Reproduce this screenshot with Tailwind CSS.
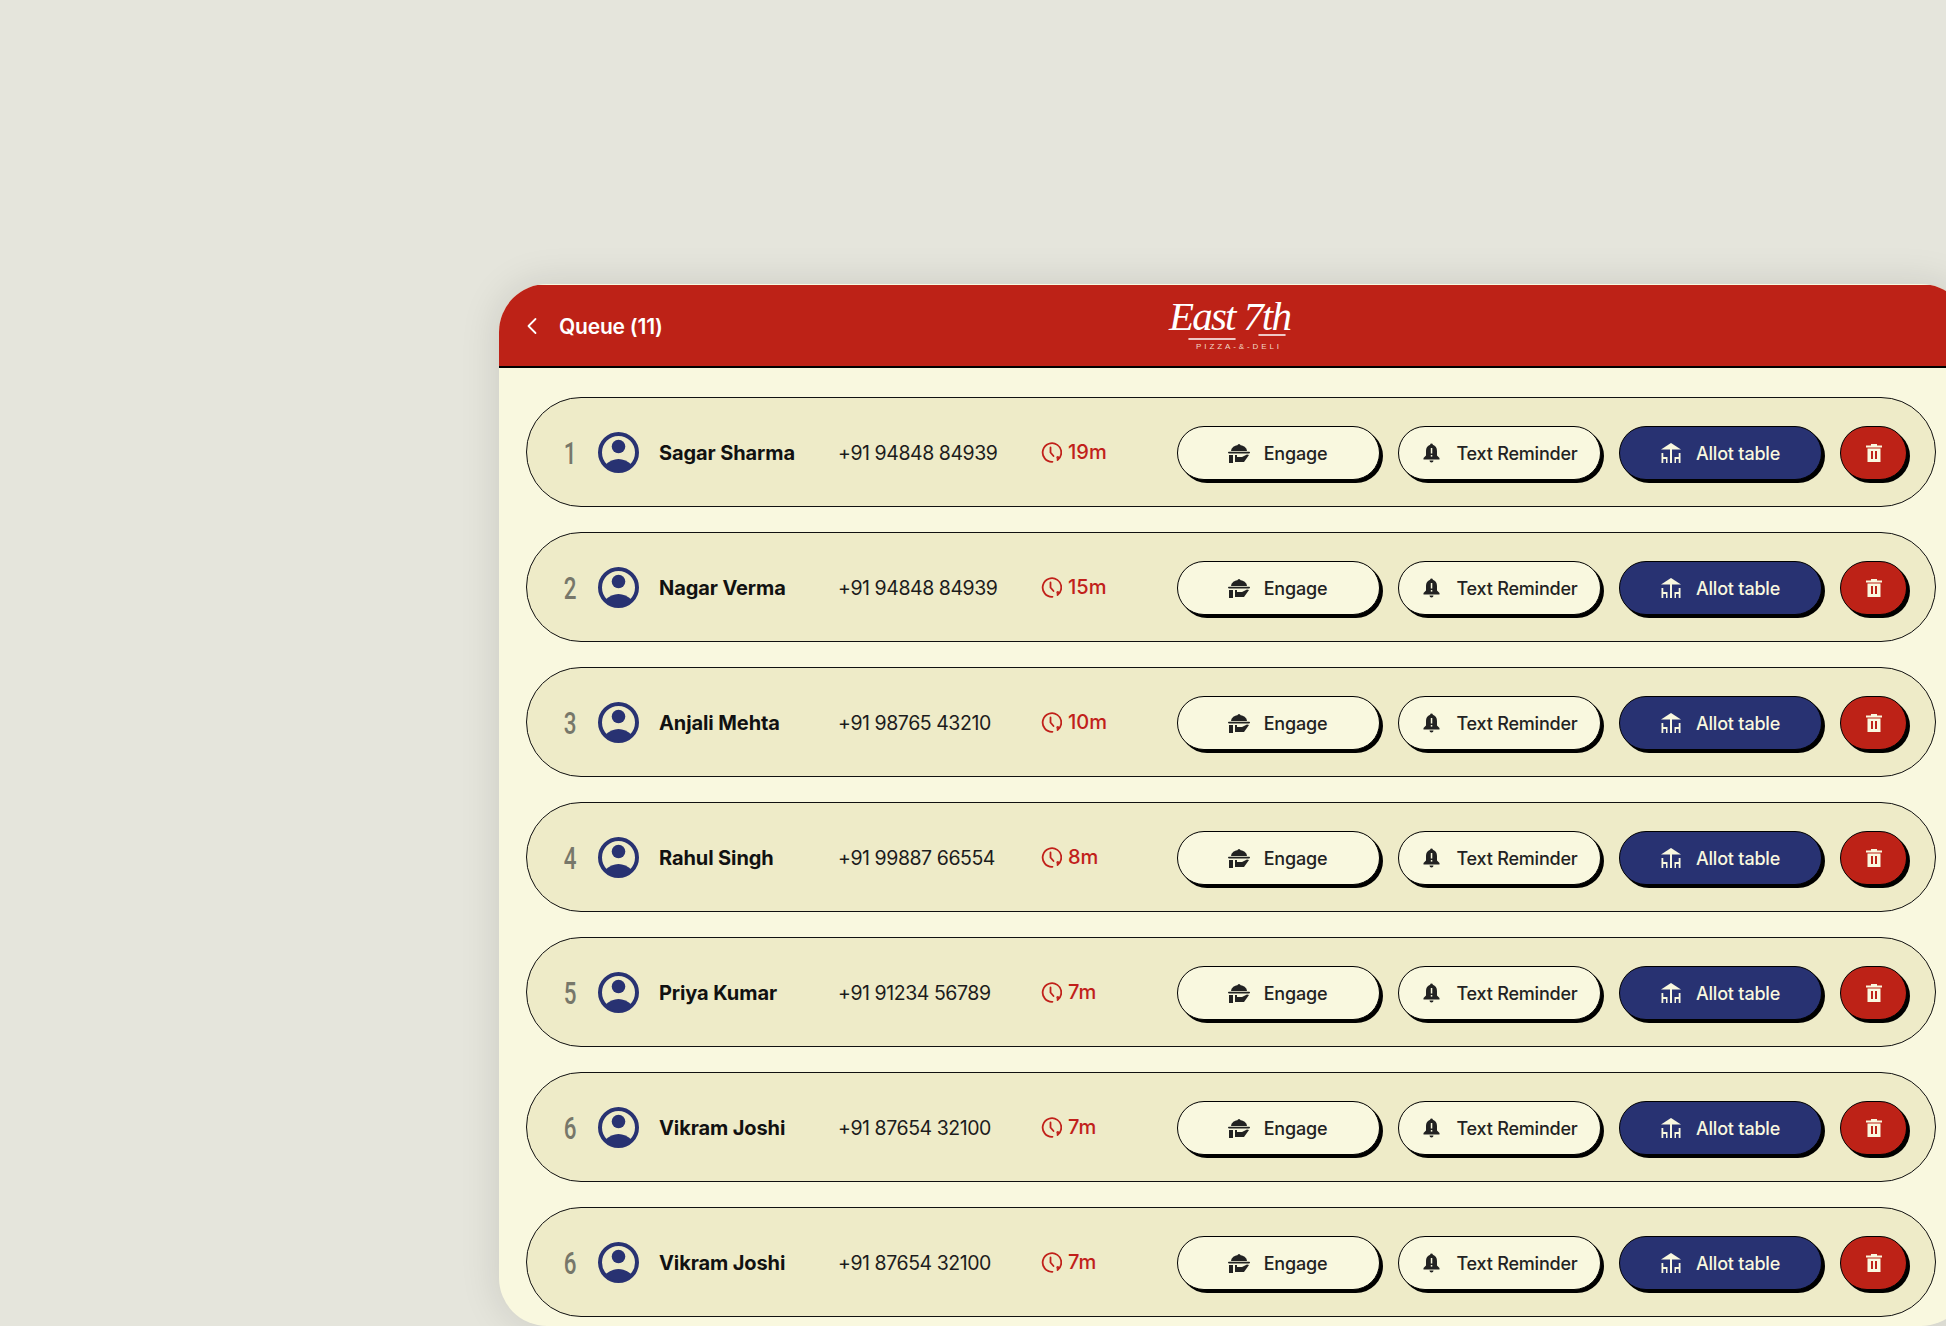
<!DOCTYPE html>
<html>
<head>
<meta charset="utf-8">
<script src="https://cdn.jsdelivr.net/npm/@tailwindcss/browser@4"></script>
</head>
<body class="bg-[#e5e5dc] overflow-hidden">
<div class="w-[1946px] h-[1326px] overflow-hidden pt-[284px] pl-[499px] font-['Inter',sans-serif]">
  <div class="w-[1470px] h-[1042px] rounded-[48px] overflow-hidden bg-[#f9f8df] shadow-[0_0_40px_rgba(0,0,0,0.12)] flex flex-col pt-px">
    <header class="relative h-[83px] shrink-0 bg-[#bd2217] border-b-2 border-black flex items-center text-white">
      <svg class="ml-[28px] w-[10px] h-[18px]" viewBox="0 0 10 18" fill="none" stroke="#fff" stroke-width="1.8" stroke-linecap="round" stroke-linejoin="round"><path d="M8.5 2 L1.5 9 L8.5 16"/></svg>
      <h1 class="ml-[22px] mt-[2px] text-[21px] leading-none font-semibold tracking-[-0.2px]">Queue (11)</h1>
      <div class="absolute left-[670px] top-[12px] w-[120px] h-[56px] text-center">
        <div class="font-['Liberation_Serif',serif] italic text-[41px] leading-[38px] tracking-[-1.8px] whitespace-nowrap h-[38px]">East 7th</div>
        <svg class="absolute left-[0px] top-[34px] w-[120px] h-[10px]" viewBox="0 0 120 10" fill="none"><path d="M20 8 H66 M90 4 H116" stroke="#fff" stroke-width="1.6" stroke-linecap="round"/></svg>
        <div class="mt-[8px] font-['Liberation_Sans',sans-serif] text-[8px] leading-[8px] tracking-[2.9px] text-[#f3d9c6] whitespace-nowrap pl-[20px]">PIZZA-&amp;-DELI</div>
      </div>
    </header>

    <main class="pt-[29px] pl-[27px] flex flex-col gap-[25px]">
      <!-- row 1 -->
      <div class="w-[1410px] h-[110px] shrink-0 rounded-full border border-[#111] bg-[#eeebc8] flex items-center pt-[2px]">
        <span class="ml-[33px] w-[20px] text-center text-[32px] leading-none font-medium text-[#77776a] scale-x-[0.7] font-['Roboto',sans-serif]">1</span>
        <svg class="ml-[18px] -mt-[2px] w-[41px] h-[41px] shrink-0" viewBox="0 0 41 41"><circle cx="20.5" cy="20.5" r="18.5" fill="none" stroke="#283272" stroke-width="4"/><circle cx="20.5" cy="14.5" r="6.8" fill="#283272"/><path d="M7 33 C11 29 16 27 20.5 27 C25 27 30 29 34 33 A 18.5 18.5 0 0 1 7 33Z" fill="#283272"/></svg>
        <span class="ml-[20px] w-[179px] text-[20px] font-bold tracking-[-0.1px] text-[#111]">Sagar Sharma</span>
        <span class="w-[203px] mt-[2px] text-[19.5px] tracking-[-0.45px] text-[#1c1c1c]">+91 94848 84939</span>
        <span class="w-[136px] -mt-[2px] flex items-center gap-[6px] text-[20px] font-medium text-[#c1201a]"><svg class="w-[21px] h-[21px]" viewBox="0 0 21 21" fill="none" stroke="#c1201a" stroke-width="1.8" stroke-linecap="round"><path d="M16.5 18 A 9.3 9.3 0 1 0 11.5 19.8"/><path d="M9.5 5.5 V10.5 L12.5 14"/><circle cx="16.8" cy="15.5" r=".6" fill="#c1201a"/></svg>19m</span>
        <div class="flex gap-[18px]">
          <button class="w-[203px] h-[54px] rounded-full border-[1.5px] border-black bg-[#f9f8df] shadow-[3px_3px_0_#000] flex items-center justify-center gap-[14px] pr-[2px] text-[18px] font-medium tracking-[-0.2px] text-[#222]"><svg class="w-[22px] h-[19px]" viewBox="0 0 22 19" fill="#222"><circle cx="11" cy="1.5" r="1.5"/><path d="M3 7 A8 6 0 0 1 19 7Z"/><rect x="0" y="7.8" width="22" height="1.6" rx=".8"/><rect x="1" y="11" width="4" height="8"/><path d="M7 11 H9 V13 L14 13 L19 10.5 L21 11 L16 18 H7Z"/></svg>Engage</button>
          <button class="w-[203px] h-[54px] rounded-full border-[1.5px] border-black bg-[#f9f8df] shadow-[3px_3px_0_#000] flex items-center justify-center gap-[16px] pl-[2px] text-[18px] font-medium tracking-[-0.2px] text-[#222]"><svg class="w-[17px] h-[20px]" viewBox="0 0 17 20"><path d="M8.5 0.5 a1.5 1.5 0 0 1 1.4 1.3 C12.5 2.6 14 5 14 8 V12.5 L16.5 15 V16.5 H0.5 V15 L3 12.5 V8 C3 5 4.5 2.6 7.1 1.8 A1.5 1.5 0 0 1 8.5 .5Z" fill="#222"/><path d="M6.5 17.5 H10.5 A2 2 0 0 1 6.5 17.5Z" fill="#222"/><rect x="7.8" y="5" width="1.5" height="5.5" fill="#f9f8df"/><rect x="7.8" y="12" width="1.5" height="1.6" fill="#f9f8df"/></svg>Text Reminder</button>
          <button class="w-[203px] h-[54px] rounded-full border-[1.5px] border-black bg-[#283272] shadow-[3px_3px_0_#000] flex items-center justify-center gap-[15px] text-[18px] font-medium tracking-[-0.2px] text-[#f9f8df]"><svg class="w-[20px] h-[20px]" viewBox="0 0 20 20" fill="#f9f8df"><path d="M10 0 L20 6.5 H0Z"/><rect x="9" y="6" width="2" height="14"/><rect x="0.5" y="10" width="1.8" height="10"/><path d="M2 14 H6.5 V20 H5 V16 H2Z"/><rect x="17.7" y="10" width="1.8" height="10"/><path d="M18 14 H13.5 V20 H15 V16 H18Z"/></svg>Allot table</button>
          <button class="w-[67px] h-[54px] rounded-full border-[1.5px] border-black bg-[#bd2217] shadow-[3px_3px_0_#000] flex items-center justify-center"><svg class="w-[16px] h-[18px]" viewBox="0 0 16 18" fill="#f9f8df"><path d="M0 1.5 H5 V0 H11 V1.5 H16 V3.5 H0Z"/><path fill-rule="evenodd" d="M1.5 4.5 H14.5 V18 H1.5Z M5 7 V15 H7 V7Z M9 7 V15 H11 V7Z"/></svg></button>
        </div>
      </div>
      <!-- row 2 -->
      <div class="w-[1410px] h-[110px] shrink-0 rounded-full border border-[#111] bg-[#eeebc8] flex items-center pt-[2px]">
        <span class="ml-[33px] w-[20px] text-center text-[32px] leading-none font-medium text-[#77776a] scale-x-[0.7] font-['Roboto',sans-serif]">2</span>
        <svg class="ml-[18px] -mt-[2px] w-[41px] h-[41px] shrink-0" viewBox="0 0 41 41"><circle cx="20.5" cy="20.5" r="18.5" fill="none" stroke="#283272" stroke-width="4"/><circle cx="20.5" cy="14.5" r="6.8" fill="#283272"/><path d="M7 33 C11 29 16 27 20.5 27 C25 27 30 29 34 33 A 18.5 18.5 0 0 1 7 33Z" fill="#283272"/></svg>
        <span class="ml-[20px] w-[179px] text-[20px] font-bold tracking-[-0.1px] text-[#111]">Nagar Verma</span>
        <span class="w-[203px] mt-[2px] text-[19.5px] tracking-[-0.45px] text-[#1c1c1c]">+91 94848 84939</span>
        <span class="w-[136px] -mt-[2px] flex items-center gap-[6px] text-[20px] font-medium text-[#c1201a]"><svg class="w-[21px] h-[21px]" viewBox="0 0 21 21" fill="none" stroke="#c1201a" stroke-width="1.8" stroke-linecap="round"><path d="M16.5 18 A 9.3 9.3 0 1 0 11.5 19.8"/><path d="M9.5 5.5 V10.5 L12.5 14"/><circle cx="16.8" cy="15.5" r=".6" fill="#c1201a"/></svg>15m</span>
        <div class="flex gap-[18px]">
          <button class="w-[203px] h-[54px] rounded-full border-[1.5px] border-black bg-[#f9f8df] shadow-[3px_3px_0_#000] flex items-center justify-center gap-[14px] pr-[2px] text-[18px] font-medium tracking-[-0.2px] text-[#222]"><svg class="w-[22px] h-[19px]" viewBox="0 0 22 19" fill="#222"><circle cx="11" cy="1.5" r="1.5"/><path d="M3 7 A8 6 0 0 1 19 7Z"/><rect x="0" y="7.8" width="22" height="1.6" rx=".8"/><rect x="1" y="11" width="4" height="8"/><path d="M7 11 H9 V13 L14 13 L19 10.5 L21 11 L16 18 H7Z"/></svg>Engage</button>
          <button class="w-[203px] h-[54px] rounded-full border-[1.5px] border-black bg-[#f9f8df] shadow-[3px_3px_0_#000] flex items-center justify-center gap-[16px] pl-[2px] text-[18px] font-medium tracking-[-0.2px] text-[#222]"><svg class="w-[17px] h-[20px]" viewBox="0 0 17 20"><path d="M8.5 0.5 a1.5 1.5 0 0 1 1.4 1.3 C12.5 2.6 14 5 14 8 V12.5 L16.5 15 V16.5 H0.5 V15 L3 12.5 V8 C3 5 4.5 2.6 7.1 1.8 A1.5 1.5 0 0 1 8.5 .5Z" fill="#222"/><path d="M6.5 17.5 H10.5 A2 2 0 0 1 6.5 17.5Z" fill="#222"/><rect x="7.8" y="5" width="1.5" height="5.5" fill="#f9f8df"/><rect x="7.8" y="12" width="1.5" height="1.6" fill="#f9f8df"/></svg>Text Reminder</button>
          <button class="w-[203px] h-[54px] rounded-full border-[1.5px] border-black bg-[#283272] shadow-[3px_3px_0_#000] flex items-center justify-center gap-[15px] text-[18px] font-medium tracking-[-0.2px] text-[#f9f8df]"><svg class="w-[20px] h-[20px]" viewBox="0 0 20 20" fill="#f9f8df"><path d="M10 0 L20 6.5 H0Z"/><rect x="9" y="6" width="2" height="14"/><rect x="0.5" y="10" width="1.8" height="10"/><path d="M2 14 H6.5 V20 H5 V16 H2Z"/><rect x="17.7" y="10" width="1.8" height="10"/><path d="M18 14 H13.5 V20 H15 V16 H18Z"/></svg>Allot table</button>
          <button class="w-[67px] h-[54px] rounded-full border-[1.5px] border-black bg-[#bd2217] shadow-[3px_3px_0_#000] flex items-center justify-center"><svg class="w-[16px] h-[18px]" viewBox="0 0 16 18" fill="#f9f8df"><path d="M0 1.5 H5 V0 H11 V1.5 H16 V3.5 H0Z"/><path fill-rule="evenodd" d="M1.5 4.5 H14.5 V18 H1.5Z M5 7 V15 H7 V7Z M9 7 V15 H11 V7Z"/></svg></button>
        </div>
      </div>
      <!-- row 3 -->
      <div class="w-[1410px] h-[110px] shrink-0 rounded-full border border-[#111] bg-[#eeebc8] flex items-center pt-[2px]">
        <span class="ml-[33px] w-[20px] text-center text-[32px] leading-none font-medium text-[#77776a] scale-x-[0.7] font-['Roboto',sans-serif]">3</span>
        <svg class="ml-[18px] -mt-[2px] w-[41px] h-[41px] shrink-0" viewBox="0 0 41 41"><circle cx="20.5" cy="20.5" r="18.5" fill="none" stroke="#283272" stroke-width="4"/><circle cx="20.5" cy="14.5" r="6.8" fill="#283272"/><path d="M7 33 C11 29 16 27 20.5 27 C25 27 30 29 34 33 A 18.5 18.5 0 0 1 7 33Z" fill="#283272"/></svg>
        <span class="ml-[20px] w-[179px] text-[20px] font-bold tracking-[-0.1px] text-[#111]">Anjali Mehta</span>
        <span class="w-[203px] mt-[2px] text-[19.5px] tracking-[-0.45px] text-[#1c1c1c]">+91 98765 43210</span>
        <span class="w-[136px] -mt-[2px] flex items-center gap-[6px] text-[20px] font-medium text-[#c1201a]"><svg class="w-[21px] h-[21px]" viewBox="0 0 21 21" fill="none" stroke="#c1201a" stroke-width="1.8" stroke-linecap="round"><path d="M16.5 18 A 9.3 9.3 0 1 0 11.5 19.8"/><path d="M9.5 5.5 V10.5 L12.5 14"/><circle cx="16.8" cy="15.5" r=".6" fill="#c1201a"/></svg>10m</span>
        <div class="flex gap-[18px]">
          <button class="w-[203px] h-[54px] rounded-full border-[1.5px] border-black bg-[#f9f8df] shadow-[3px_3px_0_#000] flex items-center justify-center gap-[14px] pr-[2px] text-[18px] font-medium tracking-[-0.2px] text-[#222]"><svg class="w-[22px] h-[19px]" viewBox="0 0 22 19" fill="#222"><circle cx="11" cy="1.5" r="1.5"/><path d="M3 7 A8 6 0 0 1 19 7Z"/><rect x="0" y="7.8" width="22" height="1.6" rx=".8"/><rect x="1" y="11" width="4" height="8"/><path d="M7 11 H9 V13 L14 13 L19 10.5 L21 11 L16 18 H7Z"/></svg>Engage</button>
          <button class="w-[203px] h-[54px] rounded-full border-[1.5px] border-black bg-[#f9f8df] shadow-[3px_3px_0_#000] flex items-center justify-center gap-[16px] pl-[2px] text-[18px] font-medium tracking-[-0.2px] text-[#222]"><svg class="w-[17px] h-[20px]" viewBox="0 0 17 20"><path d="M8.5 0.5 a1.5 1.5 0 0 1 1.4 1.3 C12.5 2.6 14 5 14 8 V12.5 L16.5 15 V16.5 H0.5 V15 L3 12.5 V8 C3 5 4.5 2.6 7.1 1.8 A1.5 1.5 0 0 1 8.5 .5Z" fill="#222"/><path d="M6.5 17.5 H10.5 A2 2 0 0 1 6.5 17.5Z" fill="#222"/><rect x="7.8" y="5" width="1.5" height="5.5" fill="#f9f8df"/><rect x="7.8" y="12" width="1.5" height="1.6" fill="#f9f8df"/></svg>Text Reminder</button>
          <button class="w-[203px] h-[54px] rounded-full border-[1.5px] border-black bg-[#283272] shadow-[3px_3px_0_#000] flex items-center justify-center gap-[15px] text-[18px] font-medium tracking-[-0.2px] text-[#f9f8df]"><svg class="w-[20px] h-[20px]" viewBox="0 0 20 20" fill="#f9f8df"><path d="M10 0 L20 6.5 H0Z"/><rect x="9" y="6" width="2" height="14"/><rect x="0.5" y="10" width="1.8" height="10"/><path d="M2 14 H6.5 V20 H5 V16 H2Z"/><rect x="17.7" y="10" width="1.8" height="10"/><path d="M18 14 H13.5 V20 H15 V16 H18Z"/></svg>Allot table</button>
          <button class="w-[67px] h-[54px] rounded-full border-[1.5px] border-black bg-[#bd2217] shadow-[3px_3px_0_#000] flex items-center justify-center"><svg class="w-[16px] h-[18px]" viewBox="0 0 16 18" fill="#f9f8df"><path d="M0 1.5 H5 V0 H11 V1.5 H16 V3.5 H0Z"/><path fill-rule="evenodd" d="M1.5 4.5 H14.5 V18 H1.5Z M5 7 V15 H7 V7Z M9 7 V15 H11 V7Z"/></svg></button>
        </div>
      </div>
      <!-- row 4 -->
      <div class="w-[1410px] h-[110px] shrink-0 rounded-full border border-[#111] bg-[#eeebc8] flex items-center pt-[2px]">
        <span class="ml-[33px] w-[20px] text-center text-[32px] leading-none font-medium text-[#77776a] scale-x-[0.7] font-['Roboto',sans-serif]">4</span>
        <svg class="ml-[18px] -mt-[2px] w-[41px] h-[41px] shrink-0" viewBox="0 0 41 41"><circle cx="20.5" cy="20.5" r="18.5" fill="none" stroke="#283272" stroke-width="4"/><circle cx="20.5" cy="14.5" r="6.8" fill="#283272"/><path d="M7 33 C11 29 16 27 20.5 27 C25 27 30 29 34 33 A 18.5 18.5 0 0 1 7 33Z" fill="#283272"/></svg>
        <span class="ml-[20px] w-[179px] text-[20px] font-bold tracking-[-0.1px] text-[#111]">Rahul Singh</span>
        <span class="w-[203px] mt-[2px] text-[19.5px] tracking-[-0.45px] text-[#1c1c1c]">+91 99887 66554</span>
        <span class="w-[136px] -mt-[2px] flex items-center gap-[6px] text-[20px] font-medium text-[#c1201a]"><svg class="w-[21px] h-[21px]" viewBox="0 0 21 21" fill="none" stroke="#c1201a" stroke-width="1.8" stroke-linecap="round"><path d="M16.5 18 A 9.3 9.3 0 1 0 11.5 19.8"/><path d="M9.5 5.5 V10.5 L12.5 14"/><circle cx="16.8" cy="15.5" r=".6" fill="#c1201a"/></svg>8m</span>
        <div class="flex gap-[18px]">
          <button class="w-[203px] h-[54px] rounded-full border-[1.5px] border-black bg-[#f9f8df] shadow-[3px_3px_0_#000] flex items-center justify-center gap-[14px] pr-[2px] text-[18px] font-medium tracking-[-0.2px] text-[#222]"><svg class="w-[22px] h-[19px]" viewBox="0 0 22 19" fill="#222"><circle cx="11" cy="1.5" r="1.5"/><path d="M3 7 A8 6 0 0 1 19 7Z"/><rect x="0" y="7.8" width="22" height="1.6" rx=".8"/><rect x="1" y="11" width="4" height="8"/><path d="M7 11 H9 V13 L14 13 L19 10.5 L21 11 L16 18 H7Z"/></svg>Engage</button>
          <button class="w-[203px] h-[54px] rounded-full border-[1.5px] border-black bg-[#f9f8df] shadow-[3px_3px_0_#000] flex items-center justify-center gap-[16px] pl-[2px] text-[18px] font-medium tracking-[-0.2px] text-[#222]"><svg class="w-[17px] h-[20px]" viewBox="0 0 17 20"><path d="M8.5 0.5 a1.5 1.5 0 0 1 1.4 1.3 C12.5 2.6 14 5 14 8 V12.5 L16.5 15 V16.5 H0.5 V15 L3 12.5 V8 C3 5 4.5 2.6 7.1 1.8 A1.5 1.5 0 0 1 8.5 .5Z" fill="#222"/><path d="M6.5 17.5 H10.5 A2 2 0 0 1 6.5 17.5Z" fill="#222"/><rect x="7.8" y="5" width="1.5" height="5.5" fill="#f9f8df"/><rect x="7.8" y="12" width="1.5" height="1.6" fill="#f9f8df"/></svg>Text Reminder</button>
          <button class="w-[203px] h-[54px] rounded-full border-[1.5px] border-black bg-[#283272] shadow-[3px_3px_0_#000] flex items-center justify-center gap-[15px] text-[18px] font-medium tracking-[-0.2px] text-[#f9f8df]"><svg class="w-[20px] h-[20px]" viewBox="0 0 20 20" fill="#f9f8df"><path d="M10 0 L20 6.5 H0Z"/><rect x="9" y="6" width="2" height="14"/><rect x="0.5" y="10" width="1.8" height="10"/><path d="M2 14 H6.5 V20 H5 V16 H2Z"/><rect x="17.7" y="10" width="1.8" height="10"/><path d="M18 14 H13.5 V20 H15 V16 H18Z"/></svg>Allot table</button>
          <button class="w-[67px] h-[54px] rounded-full border-[1.5px] border-black bg-[#bd2217] shadow-[3px_3px_0_#000] flex items-center justify-center"><svg class="w-[16px] h-[18px]" viewBox="0 0 16 18" fill="#f9f8df"><path d="M0 1.5 H5 V0 H11 V1.5 H16 V3.5 H0Z"/><path fill-rule="evenodd" d="M1.5 4.5 H14.5 V18 H1.5Z M5 7 V15 H7 V7Z M9 7 V15 H11 V7Z"/></svg></button>
        </div>
      </div>
      <!-- row 5 -->
      <div class="w-[1410px] h-[110px] shrink-0 rounded-full border border-[#111] bg-[#eeebc8] flex items-center pt-[2px]">
        <span class="ml-[33px] w-[20px] text-center text-[32px] leading-none font-medium text-[#77776a] scale-x-[0.7] font-['Roboto',sans-serif]">5</span>
        <svg class="ml-[18px] -mt-[2px] w-[41px] h-[41px] shrink-0" viewBox="0 0 41 41"><circle cx="20.5" cy="20.5" r="18.5" fill="none" stroke="#283272" stroke-width="4"/><circle cx="20.5" cy="14.5" r="6.8" fill="#283272"/><path d="M7 33 C11 29 16 27 20.5 27 C25 27 30 29 34 33 A 18.5 18.5 0 0 1 7 33Z" fill="#283272"/></svg>
        <span class="ml-[20px] w-[179px] text-[20px] font-bold tracking-[-0.1px] text-[#111]">Priya Kumar</span>
        <span class="w-[203px] mt-[2px] text-[19.5px] tracking-[-0.45px] text-[#1c1c1c]">+91 91234 56789</span>
        <span class="w-[136px] -mt-[2px] flex items-center gap-[6px] text-[20px] font-medium text-[#c1201a]"><svg class="w-[21px] h-[21px]" viewBox="0 0 21 21" fill="none" stroke="#c1201a" stroke-width="1.8" stroke-linecap="round"><path d="M16.5 18 A 9.3 9.3 0 1 0 11.5 19.8"/><path d="M9.5 5.5 V10.5 L12.5 14"/><circle cx="16.8" cy="15.5" r=".6" fill="#c1201a"/></svg>7m</span>
        <div class="flex gap-[18px]">
          <button class="w-[203px] h-[54px] rounded-full border-[1.5px] border-black bg-[#f9f8df] shadow-[3px_3px_0_#000] flex items-center justify-center gap-[14px] pr-[2px] text-[18px] font-medium tracking-[-0.2px] text-[#222]"><svg class="w-[22px] h-[19px]" viewBox="0 0 22 19" fill="#222"><circle cx="11" cy="1.5" r="1.5"/><path d="M3 7 A8 6 0 0 1 19 7Z"/><rect x="0" y="7.8" width="22" height="1.6" rx=".8"/><rect x="1" y="11" width="4" height="8"/><path d="M7 11 H9 V13 L14 13 L19 10.5 L21 11 L16 18 H7Z"/></svg>Engage</button>
          <button class="w-[203px] h-[54px] rounded-full border-[1.5px] border-black bg-[#f9f8df] shadow-[3px_3px_0_#000] flex items-center justify-center gap-[16px] pl-[2px] text-[18px] font-medium tracking-[-0.2px] text-[#222]"><svg class="w-[17px] h-[20px]" viewBox="0 0 17 20"><path d="M8.5 0.5 a1.5 1.5 0 0 1 1.4 1.3 C12.5 2.6 14 5 14 8 V12.5 L16.5 15 V16.5 H0.5 V15 L3 12.5 V8 C3 5 4.5 2.6 7.1 1.8 A1.5 1.5 0 0 1 8.5 .5Z" fill="#222"/><path d="M6.5 17.5 H10.5 A2 2 0 0 1 6.5 17.5Z" fill="#222"/><rect x="7.8" y="5" width="1.5" height="5.5" fill="#f9f8df"/><rect x="7.8" y="12" width="1.5" height="1.6" fill="#f9f8df"/></svg>Text Reminder</button>
          <button class="w-[203px] h-[54px] rounded-full border-[1.5px] border-black bg-[#283272] shadow-[3px_3px_0_#000] flex items-center justify-center gap-[15px] text-[18px] font-medium tracking-[-0.2px] text-[#f9f8df]"><svg class="w-[20px] h-[20px]" viewBox="0 0 20 20" fill="#f9f8df"><path d="M10 0 L20 6.5 H0Z"/><rect x="9" y="6" width="2" height="14"/><rect x="0.5" y="10" width="1.8" height="10"/><path d="M2 14 H6.5 V20 H5 V16 H2Z"/><rect x="17.7" y="10" width="1.8" height="10"/><path d="M18 14 H13.5 V20 H15 V16 H18Z"/></svg>Allot table</button>
          <button class="w-[67px] h-[54px] rounded-full border-[1.5px] border-black bg-[#bd2217] shadow-[3px_3px_0_#000] flex items-center justify-center"><svg class="w-[16px] h-[18px]" viewBox="0 0 16 18" fill="#f9f8df"><path d="M0 1.5 H5 V0 H11 V1.5 H16 V3.5 H0Z"/><path fill-rule="evenodd" d="M1.5 4.5 H14.5 V18 H1.5Z M5 7 V15 H7 V7Z M9 7 V15 H11 V7Z"/></svg></button>
        </div>
      </div>
      <!-- row 6 -->
      <div class="w-[1410px] h-[110px] shrink-0 rounded-full border border-[#111] bg-[#eeebc8] flex items-center pt-[2px]">
        <span class="ml-[33px] w-[20px] text-center text-[32px] leading-none font-medium text-[#77776a] scale-x-[0.7] font-['Roboto',sans-serif]">6</span>
        <svg class="ml-[18px] -mt-[2px] w-[41px] h-[41px] shrink-0" viewBox="0 0 41 41"><circle cx="20.5" cy="20.5" r="18.5" fill="none" stroke="#283272" stroke-width="4"/><circle cx="20.5" cy="14.5" r="6.8" fill="#283272"/><path d="M7 33 C11 29 16 27 20.5 27 C25 27 30 29 34 33 A 18.5 18.5 0 0 1 7 33Z" fill="#283272"/></svg>
        <span class="ml-[20px] w-[179px] text-[20px] font-bold tracking-[-0.1px] text-[#111]">Vikram Joshi</span>
        <span class="w-[203px] mt-[2px] text-[19.5px] tracking-[-0.45px] text-[#1c1c1c]">+91 87654 32100</span>
        <span class="w-[136px] -mt-[2px] flex items-center gap-[6px] text-[20px] font-medium text-[#c1201a]"><svg class="w-[21px] h-[21px]" viewBox="0 0 21 21" fill="none" stroke="#c1201a" stroke-width="1.8" stroke-linecap="round"><path d="M16.5 18 A 9.3 9.3 0 1 0 11.5 19.8"/><path d="M9.5 5.5 V10.5 L12.5 14"/><circle cx="16.8" cy="15.5" r=".6" fill="#c1201a"/></svg>7m</span>
        <div class="flex gap-[18px]">
          <button class="w-[203px] h-[54px] rounded-full border-[1.5px] border-black bg-[#f9f8df] shadow-[3px_3px_0_#000] flex items-center justify-center gap-[14px] pr-[2px] text-[18px] font-medium tracking-[-0.2px] text-[#222]"><svg class="w-[22px] h-[19px]" viewBox="0 0 22 19" fill="#222"><circle cx="11" cy="1.5" r="1.5"/><path d="M3 7 A8 6 0 0 1 19 7Z"/><rect x="0" y="7.8" width="22" height="1.6" rx=".8"/><rect x="1" y="11" width="4" height="8"/><path d="M7 11 H9 V13 L14 13 L19 10.5 L21 11 L16 18 H7Z"/></svg>Engage</button>
          <button class="w-[203px] h-[54px] rounded-full border-[1.5px] border-black bg-[#f9f8df] shadow-[3px_3px_0_#000] flex items-center justify-center gap-[16px] pl-[2px] text-[18px] font-medium tracking-[-0.2px] text-[#222]"><svg class="w-[17px] h-[20px]" viewBox="0 0 17 20"><path d="M8.5 0.5 a1.5 1.5 0 0 1 1.4 1.3 C12.5 2.6 14 5 14 8 V12.5 L16.5 15 V16.5 H0.5 V15 L3 12.5 V8 C3 5 4.5 2.6 7.1 1.8 A1.5 1.5 0 0 1 8.5 .5Z" fill="#222"/><path d="M6.5 17.5 H10.5 A2 2 0 0 1 6.5 17.5Z" fill="#222"/><rect x="7.8" y="5" width="1.5" height="5.5" fill="#f9f8df"/><rect x="7.8" y="12" width="1.5" height="1.6" fill="#f9f8df"/></svg>Text Reminder</button>
          <button class="w-[203px] h-[54px] rounded-full border-[1.5px] border-black bg-[#283272] shadow-[3px_3px_0_#000] flex items-center justify-center gap-[15px] text-[18px] font-medium tracking-[-0.2px] text-[#f9f8df]"><svg class="w-[20px] h-[20px]" viewBox="0 0 20 20" fill="#f9f8df"><path d="M10 0 L20 6.5 H0Z"/><rect x="9" y="6" width="2" height="14"/><rect x="0.5" y="10" width="1.8" height="10"/><path d="M2 14 H6.5 V20 H5 V16 H2Z"/><rect x="17.7" y="10" width="1.8" height="10"/><path d="M18 14 H13.5 V20 H15 V16 H18Z"/></svg>Allot table</button>
          <button class="w-[67px] h-[54px] rounded-full border-[1.5px] border-black bg-[#bd2217] shadow-[3px_3px_0_#000] flex items-center justify-center"><svg class="w-[16px] h-[18px]" viewBox="0 0 16 18" fill="#f9f8df"><path d="M0 1.5 H5 V0 H11 V1.5 H16 V3.5 H0Z"/><path fill-rule="evenodd" d="M1.5 4.5 H14.5 V18 H1.5Z M5 7 V15 H7 V7Z M9 7 V15 H11 V7Z"/></svg></button>
        </div>
      </div>
      <!-- row 7 -->
      <div class="w-[1410px] h-[110px] shrink-0 rounded-full border border-[#111] bg-[#eeebc8] flex items-center pt-[2px]">
        <span class="ml-[33px] w-[20px] text-center text-[32px] leading-none font-medium text-[#77776a] scale-x-[0.7] font-['Roboto',sans-serif]">6</span>
        <svg class="ml-[18px] -mt-[2px] w-[41px] h-[41px] shrink-0" viewBox="0 0 41 41"><circle cx="20.5" cy="20.5" r="18.5" fill="none" stroke="#283272" stroke-width="4"/><circle cx="20.5" cy="14.5" r="6.8" fill="#283272"/><path d="M7 33 C11 29 16 27 20.5 27 C25 27 30 29 34 33 A 18.5 18.5 0 0 1 7 33Z" fill="#283272"/></svg>
        <span class="ml-[20px] w-[179px] text-[20px] font-bold tracking-[-0.1px] text-[#111]">Vikram Joshi</span>
        <span class="w-[203px] mt-[2px] text-[19.5px] tracking-[-0.45px] text-[#1c1c1c]">+91 87654 32100</span>
        <span class="w-[136px] -mt-[2px] flex items-center gap-[6px] text-[20px] font-medium text-[#c1201a]"><svg class="w-[21px] h-[21px]" viewBox="0 0 21 21" fill="none" stroke="#c1201a" stroke-width="1.8" stroke-linecap="round"><path d="M16.5 18 A 9.3 9.3 0 1 0 11.5 19.8"/><path d="M9.5 5.5 V10.5 L12.5 14"/><circle cx="16.8" cy="15.5" r=".6" fill="#c1201a"/></svg>7m</span>
        <div class="flex gap-[18px]">
          <button class="w-[203px] h-[54px] rounded-full border-[1.5px] border-black bg-[#f9f8df] shadow-[3px_3px_0_#000] flex items-center justify-center gap-[14px] pr-[2px] text-[18px] font-medium tracking-[-0.2px] text-[#222]"><svg class="w-[22px] h-[19px]" viewBox="0 0 22 19" fill="#222"><circle cx="11" cy="1.5" r="1.5"/><path d="M3 7 A8 6 0 0 1 19 7Z"/><rect x="0" y="7.8" width="22" height="1.6" rx=".8"/><rect x="1" y="11" width="4" height="8"/><path d="M7 11 H9 V13 L14 13 L19 10.5 L21 11 L16 18 H7Z"/></svg>Engage</button>
          <button class="w-[203px] h-[54px] rounded-full border-[1.5px] border-black bg-[#f9f8df] shadow-[3px_3px_0_#000] flex items-center justify-center gap-[16px] pl-[2px] text-[18px] font-medium tracking-[-0.2px] text-[#222]"><svg class="w-[17px] h-[20px]" viewBox="0 0 17 20"><path d="M8.5 0.5 a1.5 1.5 0 0 1 1.4 1.3 C12.5 2.6 14 5 14 8 V12.5 L16.5 15 V16.5 H0.5 V15 L3 12.5 V8 C3 5 4.5 2.6 7.1 1.8 A1.5 1.5 0 0 1 8.5 .5Z" fill="#222"/><path d="M6.5 17.5 H10.5 A2 2 0 0 1 6.5 17.5Z" fill="#222"/><rect x="7.8" y="5" width="1.5" height="5.5" fill="#f9f8df"/><rect x="7.8" y="12" width="1.5" height="1.6" fill="#f9f8df"/></svg>Text Reminder</button>
          <button class="w-[203px] h-[54px] rounded-full border-[1.5px] border-black bg-[#283272] shadow-[3px_3px_0_#000] flex items-center justify-center gap-[15px] text-[18px] font-medium tracking-[-0.2px] text-[#f9f8df]"><svg class="w-[20px] h-[20px]" viewBox="0 0 20 20" fill="#f9f8df"><path d="M10 0 L20 6.5 H0Z"/><rect x="9" y="6" width="2" height="14"/><rect x="0.5" y="10" width="1.8" height="10"/><path d="M2 14 H6.5 V20 H5 V16 H2Z"/><rect x="17.7" y="10" width="1.8" height="10"/><path d="M18 14 H13.5 V20 H15 V16 H18Z"/></svg>Allot table</button>
          <button class="w-[67px] h-[54px] rounded-full border-[1.5px] border-black bg-[#bd2217] shadow-[3px_3px_0_#000] flex items-center justify-center"><svg class="w-[16px] h-[18px]" viewBox="0 0 16 18" fill="#f9f8df"><path d="M0 1.5 H5 V0 H11 V1.5 H16 V3.5 H0Z"/><path fill-rule="evenodd" d="M1.5 4.5 H14.5 V18 H1.5Z M5 7 V15 H7 V7Z M9 7 V15 H11 V7Z"/></svg></button>
        </div>
      </div>
    </main>
  </div>
</div>
</body>
</html>
